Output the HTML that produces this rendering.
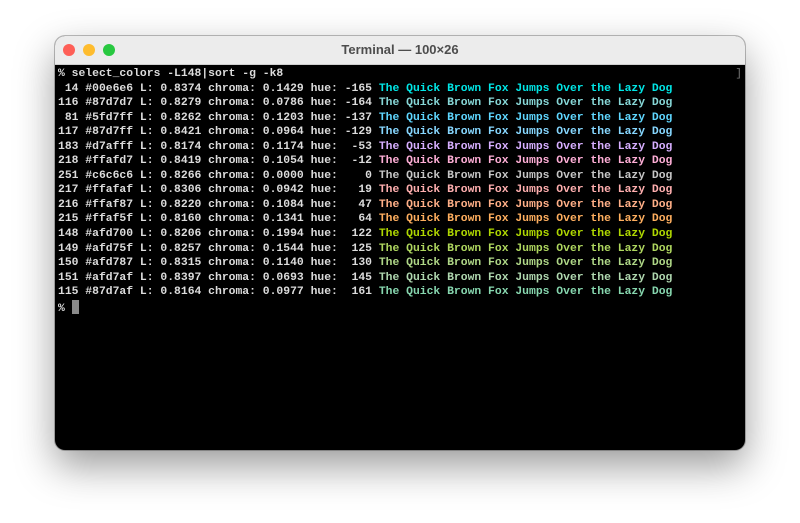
<!DOCTYPE html>
<html><head><meta charset="utf-8"><style>
html,body{margin:0;padding:0;background:#fff;width:800px;height:523px;overflow:hidden}
.win{position:absolute;left:55px;top:36px;width:690px;height:414px;border-radius:10px;background:#000;box-shadow:0 16px 40px rgba(0,0,0,0.4),0 0 0 1px rgba(0,0,0,0.25);overflow:hidden}
.tb{height:28px;background:#ececec;border-bottom:1px solid #cfcfcf;position:relative;font-family:"Liberation Sans",sans-serif;font-size:13px;color:#4d4d4d;text-align:center;line-height:28px;font-weight:bold}
.d{position:absolute;top:8px;width:12px;height:12px;border-radius:50%}
pre{margin:0;position:absolute;left:3px;top:31px;font-family:"Liberation Mono",monospace;font-size:11.38px;font-weight:bold;line-height:14.55px;color:#dcdcdc;letter-spacing:0}
.cur{display:inline-block;width:7px;height:14px;background:#8a8a8a;vertical-align:-3px}
.rb{position:absolute;right:3px;top:32px;color:#777;font-family:"Liberation Mono",monospace;font-size:11px}
</style></head><body>
<div class="win">
<div class="tb"><span class="d" style="left:8px;background:#fe5f57"></span><span class="d" style="left:28px;background:#febc2e"></span><span class="d" style="left:48px;background:#28c840"></span>Terminal — 100×26</div>
<div class="rb">]</div>
<pre>% select_colors -L148|sort -g -k8
 14 #00e6e6 L: 0.8374 chroma: 0.1429 hue: -165 <span style="color:#00e6e6">The Quick Brown Fox Jumps Over the Lazy Dog</span>
116 #87d7d7 L: 0.8279 chroma: 0.0786 hue: -164 <span style="color:#87d7d7">The Quick Brown Fox Jumps Over the Lazy Dog</span>
 81 #5fd7ff L: 0.8262 chroma: 0.1203 hue: -137 <span style="color:#5fd7ff">The Quick Brown Fox Jumps Over the Lazy Dog</span>
117 #87d7ff L: 0.8421 chroma: 0.0964 hue: -129 <span style="color:#87d7ff">The Quick Brown Fox Jumps Over the Lazy Dog</span>
183 #d7afff L: 0.8174 chroma: 0.1174 hue:  -53 <span style="color:#d7afff">The Quick Brown Fox Jumps Over the Lazy Dog</span>
218 #ffafd7 L: 0.8419 chroma: 0.1054 hue:  -12 <span style="color:#ffafd7">The Quick Brown Fox Jumps Over the Lazy Dog</span>
251 #c6c6c6 L: 0.8266 chroma: 0.0000 hue:    0 <span style="color:#c6c6c6">The Quick Brown Fox Jumps Over the Lazy Dog</span>
217 #ffafaf L: 0.8306 chroma: 0.0942 hue:   19 <span style="color:#ffafaf">The Quick Brown Fox Jumps Over the Lazy Dog</span>
216 #ffaf87 L: 0.8220 chroma: 0.1084 hue:   47 <span style="color:#ffaf87">The Quick Brown Fox Jumps Over the Lazy Dog</span>
215 #ffaf5f L: 0.8160 chroma: 0.1341 hue:   64 <span style="color:#ffaf5f">The Quick Brown Fox Jumps Over the Lazy Dog</span>
148 #afd700 L: 0.8206 chroma: 0.1994 hue:  122 <span style="color:#afd700">The Quick Brown Fox Jumps Over the Lazy Dog</span>
149 #afd75f L: 0.8257 chroma: 0.1544 hue:  125 <span style="color:#afd75f">The Quick Brown Fox Jumps Over the Lazy Dog</span>
150 #afd787 L: 0.8315 chroma: 0.1140 hue:  130 <span style="color:#afd787">The Quick Brown Fox Jumps Over the Lazy Dog</span>
151 #afd7af L: 0.8397 chroma: 0.0693 hue:  145 <span style="color:#afd7af">The Quick Brown Fox Jumps Over the Lazy Dog</span>
115 #87d7af L: 0.8164 chroma: 0.0977 hue:  161 <span style="color:#87d7af">The Quick Brown Fox Jumps Over the Lazy Dog</span>
% <span class="cur"></span></pre>
</div>
</body></html>
